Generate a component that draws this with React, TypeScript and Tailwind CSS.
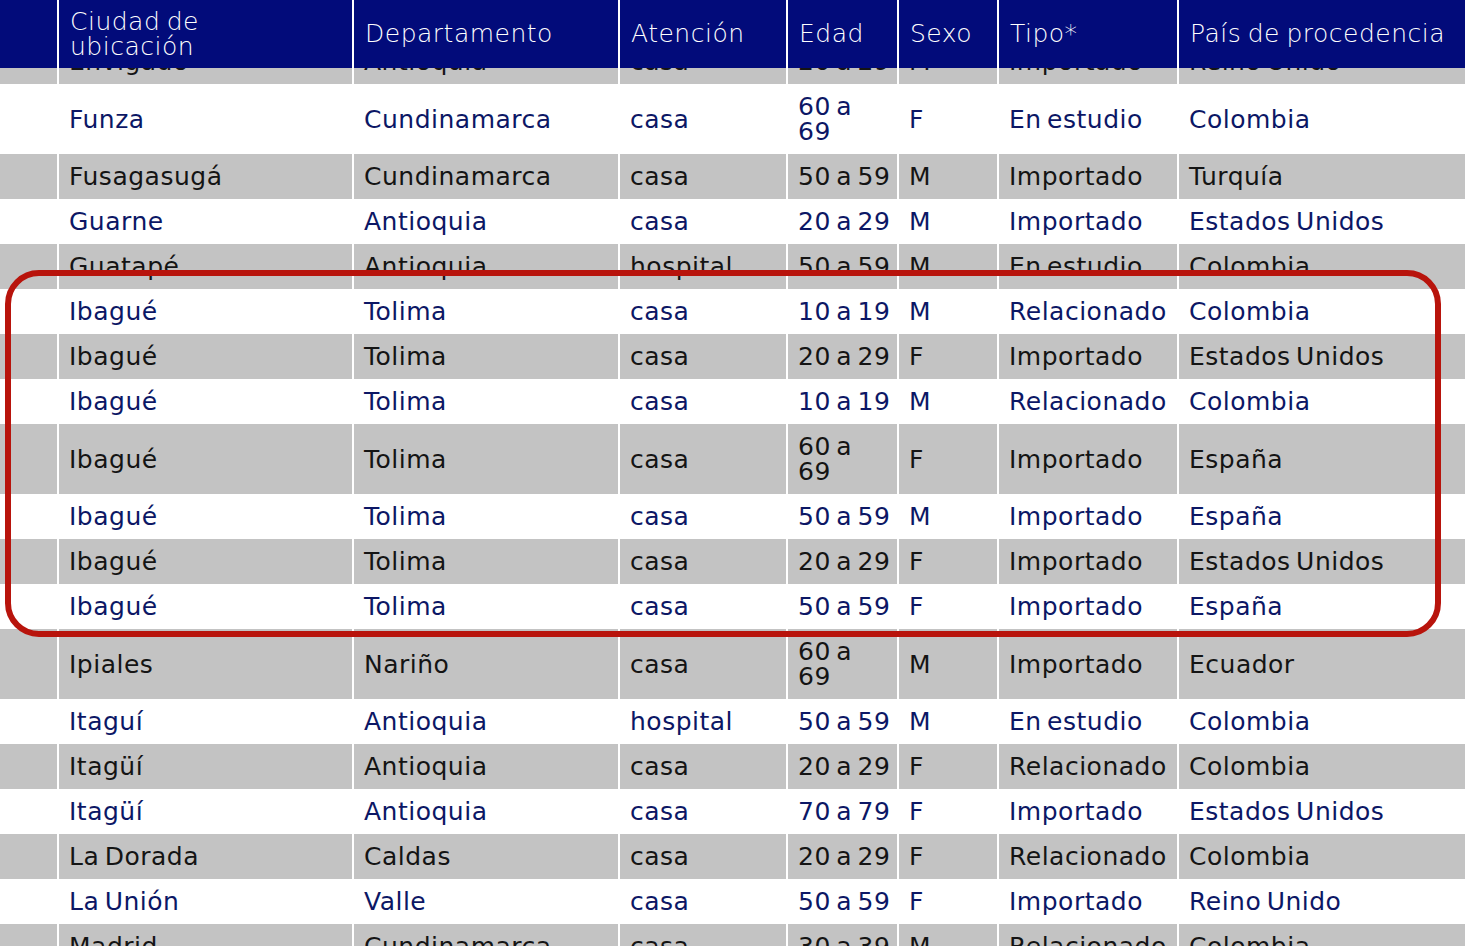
type Row = {
  ciudad: string
  depto: string
  atencion: string
  edad: string
  sexo: string
  tipo: string
  pais: string
}

const rows: Row[] = [
  { ciudad: "Envigado", depto: "Antioquia", atencion: "casa", edad: "20 a 29", sexo: "M", tipo: "Importado", pais: "Reino Unido" },
  { ciudad: "Funza", depto: "Cundinamarca", atencion: "casa", edad: "60 a|69", sexo: "F", tipo: "En estudio", pais: "Colombia" },
  { ciudad: "Fusagasugá", depto: "Cundinamarca", atencion: "casa", edad: "50 a 59", sexo: "M", tipo: "Importado", pais: "Turquía" },
  { ciudad: "Guarne", depto: "Antioquia", atencion: "casa", edad: "20 a 29", sexo: "M", tipo: "Importado", pais: "Estados Unidos" },
  { ciudad: "Guatapé", depto: "Antioquia", atencion: "hospital", edad: "50 a 59", sexo: "M", tipo: "En estudio", pais: "Colombia" },
  { ciudad: "Ibagué", depto: "Tolima", atencion: "casa", edad: "10 a 19", sexo: "M", tipo: "Relacionado", pais: "Colombia" },
  { ciudad: "Ibagué", depto: "Tolima", atencion: "casa", edad: "20 a 29", sexo: "F", tipo: "Importado", pais: "Estados Unidos" },
  { ciudad: "Ibagué", depto: "Tolima", atencion: "casa", edad: "10 a 19", sexo: "M", tipo: "Relacionado", pais: "Colombia" },
  { ciudad: "Ibagué", depto: "Tolima", atencion: "casa", edad: "60 a|69", sexo: "F", tipo: "Importado", pais: "España" },
  { ciudad: "Ibagué", depto: "Tolima", atencion: "casa", edad: "50 a 59", sexo: "M", tipo: "Importado", pais: "España" },
  { ciudad: "Ibagué", depto: "Tolima", atencion: "casa", edad: "20 a 29", sexo: "F", tipo: "Importado", pais: "Estados Unidos" },
  { ciudad: "Ibagué", depto: "Tolima", atencion: "casa", edad: "50 a 59", sexo: "F", tipo: "Importado", pais: "España" },
  { ciudad: "Ipiales", depto: "Nariño", atencion: "casa", edad: "60 a|69", sexo: "M", tipo: "Importado", pais: "Ecuador" },
  { ciudad: "Itaguí", depto: "Antioquia", atencion: "hospital", edad: "50 a 59", sexo: "M", tipo: "En estudio", pais: "Colombia" },
  { ciudad: "Itagüí", depto: "Antioquia", atencion: "casa", edad: "20 a 29", sexo: "F", tipo: "Relacionado", pais: "Colombia" },
  { ciudad: "Itagüí", depto: "Antioquia", atencion: "casa", edad: "70 a 79", sexo: "F", tipo: "Importado", pais: "Estados Unidos" },
  { ciudad: "La Dorada", depto: "Caldas", atencion: "casa", edad: "20 a 29", sexo: "F", tipo: "Relacionado", pais: "Colombia" },
  { ciudad: "La Unión", depto: "Valle", atencion: "casa", edad: "50 a 59", sexo: "F", tipo: "Importado", pais: "Reino Unido" },
  { ciudad: "Madrid", depto: "Cundinamarca", atencion: "casa", edad: "30 a 39", sexo: "M", tipo: "Relacionado", pais: "Colombia" }
]

const cols = "grid grid-cols-[57px_293px_264px_166px_109px_98px_178px_1fr] gap-x-[2px]"

function Edad({ value }: { value: string }) {
  const parts = value.split("|")
  if (parts.length === 1) return <>{value}</>
  return (
    <>
      {parts[0]}
      <br />
      {parts[1]}
    </>
  )
}

function TableRow({ row, grey }: { row: Row; grey: boolean }) {
  const cell = grey
    ? "flex items-center bg-[#c3c3c3] px-[10px] py-[10px] text-[#141414]"
    : "flex items-center bg-white px-[10px] py-[10px] text-[#0c1765]"
  const values = [row.ciudad, row.depto, row.atencion, row.edad, row.sexo, row.tipo, row.pais]

  return (
    <div className={`${cols} bg-white`}>
      <div className={cell} />
      {values.map((v, i) => (
        <div key={i} className={cell}>
          <span className="whitespace-nowrap">
            {i === 3 ? <Edad value={v} /> : v}
          </span>
        </div>
      ))}
    </div>
  )
}

export default function App() {
  const headers = ["Departamento", "Atención", "Edad", "Sexo", "Tipo*", "País de procedencia"]

  return (
    <div className="relative h-[946px] w-[1465px] overflow-hidden bg-white font-['DejaVu_Sans',sans-serif] text-[25px] leading-[25px] tracking-[0.5px] [word-spacing:-3px]">
      {/* header sits over the scrolled body */}
      <div className={`${cols} relative z-10 h-[68px] bg-white text-[25px] font-light leading-[25px] text-white [word-spacing:-2px]`}>
        <div className="bg-[#020b7a]" />
        <div className="flex items-center bg-[#020b7a] px-[11px] pb-[1px]">
          <span>
            Ciudad de
            <br />
            ubicación
          </span>
        </div>
        {headers.map((h) => (
          <div key={h} className="flex items-center bg-[#020b7a] px-[11px] pb-[2px] whitespace-nowrap">
            {h}
          </div>
        ))}
      </div>

      <div className="-mt-[29px]">
        {rows.map((row, i) => (
          <TableRow key={i} row={row} grey={i % 2 === 0} />
        ))}
      </div>

      {/* highlight box around the Ibagué rows */}
      <div className="pointer-events-none absolute left-[5px] top-[270px] z-20 h-[367px] w-[1436px] rounded-[34px] border-[6px] border-[#b8140c]" />
    </div>
  )
}
